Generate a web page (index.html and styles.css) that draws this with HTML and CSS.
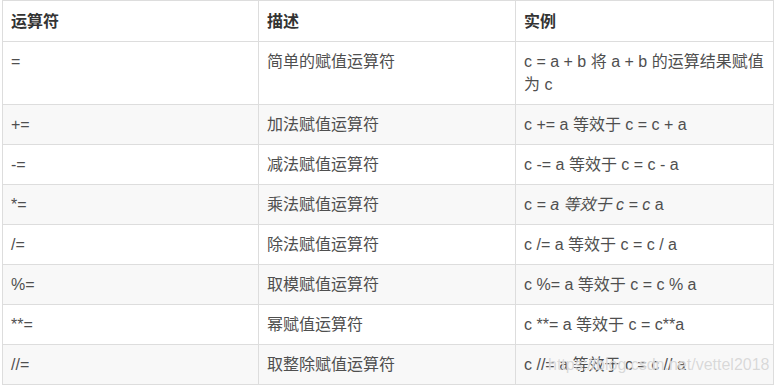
FILE: index.html
```html
<!DOCTYPE html>
<html lang="zh-CN">
<head>
<meta charset="utf-8">
<title>赋值运算符</title>
<link rel="stylesheet" href="styles.css">
</head>
<body>
<div class="wrap">
  <table class="ops">
    <colgroup>
      <col class="c1"><col class="c2"><col class="c3">
    </colgroup>
    <thead>
      <tr><th>运算符</th><th>描述</th><th>实例</th></tr>
    </thead>
    <tbody>
      <tr><td>=</td><td>简单的赋值运算符</td><td>c = a + b 将 a + b 的运算结果赋值为 c</td></tr>
      <tr><td>+=</td><td>加法赋值运算符</td><td>c += a 等效于 c = c + a</td></tr>
      <tr><td>-=</td><td>减法赋值运算符</td><td>c -= a 等效于 c = c - a</td></tr>
      <tr><td>*=</td><td>乘法赋值运算符</td><td>c <em>= a 等效于 c = c </em>a</td></tr>
      <tr><td>/=</td><td>除法赋值运算符</td><td>c /= a 等效于 c = c / a</td></tr>
      <tr><td>%=</td><td>取模赋值运算符</td><td>c %= a 等效于 c = c % a</td></tr>
      <tr><td>**=</td><td>幂赋值运算符</td><td>c **= a 等效于 c = c**a</td></tr>
      <tr><td>//=</td><td>取整除赋值运算符</td><td>c //= a 等效于 c = c // a</td></tr>
    </tbody>
  </table>
  <div class="watermark">https://blog.csdn.net/vettel2018</div>
</div>
</body>
</html>
```

FILE: styles.css
```css
html, body {
  margin: 0;
  padding: 0;
  background: #fff;
}

.wrap {
  position: relative;
  padding: 0 2px;
  width: 771px;
}

.ops {
  border-collapse: collapse;
  table-layout: fixed;
  width: 771px;
  font-family: "Liberation Sans", "Noto Sans CJK SC", sans-serif;
  font-size: 16px;
  line-height: 23px;
  color: #4f4f4f;
}

.ops .c1 { width: 256px; }
.ops .c2 { width: 257px; }
.ops .c3 { width: 258px; }

.ops th,
.ops td {
  border: 1px solid #dddddd;
  padding: 8px;
  text-align: left;
  vertical-align: top;
}

.ops th {
  padding: 9px 8px 8px;
  font-weight: bold;
  color: #333333;
}

.ops tbody tr:nth-child(even) {
  background: #f8f8f8;
}

.ops em {
  font-style: italic;
}

.watermark {
  position: absolute;
  left: 548px;
  top: 355px;
  font-family: "Liberation Sans", sans-serif;
  font-size: 16px;
  line-height: 20px;
  color: rgba(200, 200, 200, 0.7);
  text-shadow: 0 0 1px #ffffff;
  white-space: nowrap;
  pointer-events: none;
}
```
